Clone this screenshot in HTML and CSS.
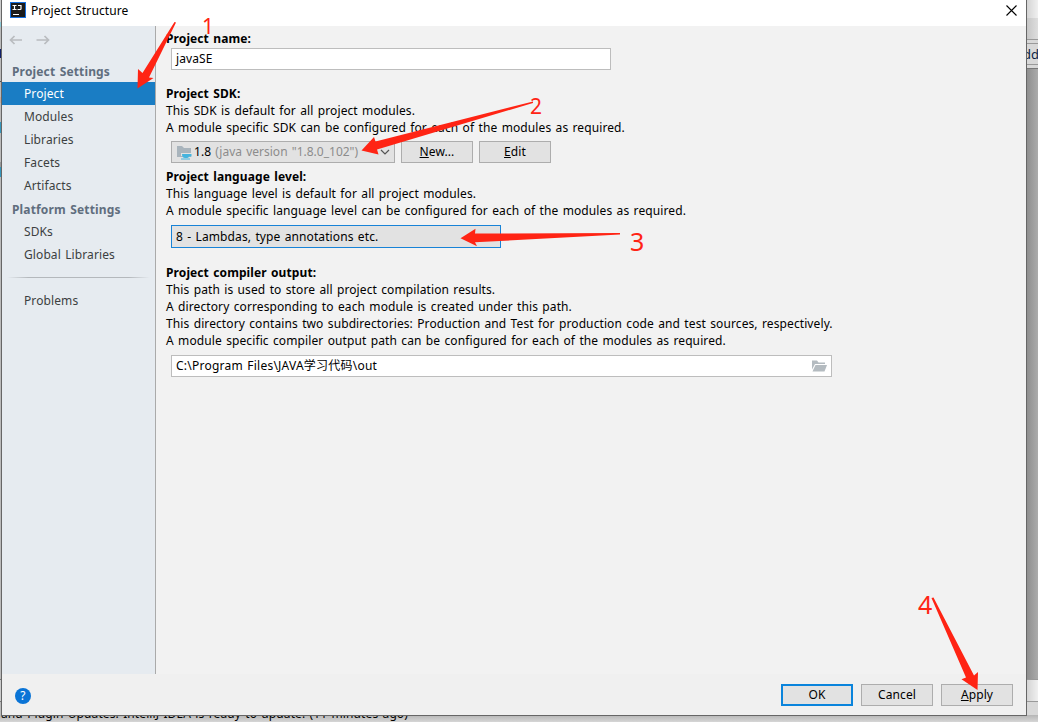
FILE: index.html
```html
<!doctype html>
<html>
<head>
	<meta charset='utf-8'>
	<title>Project Structure</title>

	<link rel="stylesheet" href="styles.css">
</head>
<body>

	<!-- the IDE behind the dialog -->
	<div class='ide'>
		<div class='ide-left'></div>
		<div class='ide-right'>
			<div class='ide-title'></div>
			<div class='ide-menu'></div>
			<div class='ide-toolbar'>dd</div>
			<div class='ide-editor'></div>
			<div class='ide-tabs'></div>
		</div>
		<div class='ide-status'><span>and Plugin Updates: IntelliJ IDEA is ready to update. (11 minutes ago)</span></div>
	</div>

	<div class='dialog'>
		<header class='titlebar'>
			<svg class='logo' width='16' height='16' viewBox='0 0 16 16'>
				<rect width='16' height='16' fill='#146ee0'/>
				<rect x='1' y='1' width='14' height='14' fill='#1b1b1b'/>
				<path d='M2.500 3.500h4M4.500 3.500v4M2.500 7.500h4M8 3.500h3v3.200q0 .8-.8.8H7.500M3 12.500h6' fill='none' stroke='#fff' stroke-width='1.2'/>
			</svg>
			<h1>Project Structure</h1>
			<svg class='close' width='11' height='11' viewBox='0 0 11 11'>
				<path d='M.5.5l10 10M10.5.5l-10 10' stroke='#000' stroke-width='1.1'/>
			</svg>
		</header>

		<div class='main'>
			<nav class='sidebar'>
				<div class='history'>
					<svg width='14' height='10' viewBox='0 0 14 10'><path d='M13 5H1.500M5.500 1L1.500 5l4 4' fill='none' stroke='#b9bcbf' stroke-width='1.7'/></svg>
					<svg width='14' height='10' viewBox='0 0 14 10'><path d='M.5 5h12M8.500 1l4 4-4 4' fill='none' stroke='#b9bcbf' stroke-width='1.7'/></svg>
				</div>
				<h2>Project Settings</h2>
				<ul>
					<li class='active'>Project</li>
					<li>Modules</li>
					<li>Libraries</li>
					<li>Facets</li>
					<li>Artifacts</li>
				</ul>
				<h2>Platform Settings</h2>
				<ul>
					<li>SDKs</li>
					<li>Global Libraries</li>
				</ul>
				<hr>
				<ul>
					<li>Problems</li>
				</ul>
			</nav>

			<div class='content'>
				<section class='name'>
					<h3>Project name:</h3>
					<div class='field name-field'>javaSE</div>
				</section>

				<section class='sdk'>
					<h3>Project SDK:</h3>
					<p>This SDK is default for all project modules.</p>
					<p>A module specific SDK can be configured for each of the modules as required.</p>
					<div class='row'>
						<div class='combo sdk-combo'>
							<svg width='16' height='16' viewBox='0 0 16 16'>
								<path d='M1 2h5l2 2h7v9H1z' fill='#a9b4bc'/>
								<path d='M5 9h11v3H5z' fill='#e3e3e3'/>
								<path d='M6 10h9.500v2.500H13Q12.500 14 11 14H9Q6 14 6 10zM5 14.500h9v1H5z' fill='#45b4de'/>
							</svg>
							<span class='version'>1.8</span>
							<span class='detail'>(java version "1.8.0_102")</span>
							<svg class='chevron' width='10' height='6' viewBox='0 0 10 6'><path d='M1 1l4 4 4-4' fill='none' stroke='#555' stroke-width='1.2'/></svg>
						</div>
						<div class='button'><u>N</u>ew...</div>
						<div class='button'><u>E</u>dit</div>
					</div>
				</section>

				<section class='level'>
					<h3>Project language level:</h3>
					<p>This language level is default for all project modules.</p>
					<p>A module specific language level can be configured for each of the modules as required.</p>
					<div class='combo level-combo'>
						<span>8 - Lambdas, type annotations etc.</span>
						<svg class='chevron' width='10' height='6' viewBox='0 0 10 6'><path d='M1 1l4 4 4-4' fill='none' stroke='#555' stroke-width='1.2'/></svg>
					</div>
				</section>

				<section class='output'>
					<h3>Project compiler output:</h3>
					<p>This path is used to store all project compilation results.</p>
					<p>A directory corresponding to each module is created under this path.</p>
					<p>This directory contains two subdirectories: Production and Test for production code and test sources, respectively.</p>
					<p>A module specific compiler output path can be configured for each of the modules as required.</p>
					<div class='field output-field'>
						<span>C:\Program Files\JAVA学习代码\out</span>
						<svg width='15' height='12' viewBox='0 0 15 12'>
							<path d='M0 .5h5l1.500 2H13V4H3L0 9.500z' fill='#b4bbc0'/>
							<path d='M3.500 5H15L12.500 11.500H.5z' fill='#b4bbc0'/>
						</svg>
					</div>
				</section>
			</div>
		</div>

		<footer class='footer'>
			<div class='help'>?</div>
			<div class='button default'>OK</div>
			<div class='button'>Cancel</div>
			<div class='button'><u>A</u>pply</div>
		</footer>
	</div>

	<!-- numbered steps drawn over the dialog -->
	<svg class='notes' width='1038' height='722' viewBox='0 0 1038 722'>
		<path d='M174.500 22l1.500.5L149 77.500l4.500.5L137.500 88.500 138 69l4.500 4z'/>
		<path d='M533 101.500v1.500L377 149.500l1.500 5L361.500 150.500l12.500-13.500 1.500 4.500z'/>
		<path d='M620 233v1.500L475 242.300l2 4L460.500 238.300l15-9.500-.5 4.800z'/>
		<path d='M931.500 598l2-.5L974 675.500l4-3.500-.5 18-16-10.700 4.500-1.800z'/>
		<text x='202' y='34'>1</text>
		<text x='530' y='114'>2</text>
		<text class='big' x='630' y='251'>3</text>
		<text class='big' x='918' y='614'>4</text>
	</svg>

</body>
</html>
```
FILE: styles.css
```css
body {
	margin: 0;
	width: 1038px;
	height: 722px;
	overflow: hidden;
	position: relative;
	font: 12px/17px "Noto Sans", "Noto Sans CJK SC", sans-serif;
	letter-spacing: .1px;
	word-spacing: 1.1px;
	color: #000;
}

h1, h2, h3, p, ul {
	margin: 0;
	padding: 0;
	font-size: inherit;
	list-style: none;
	white-space: nowrap;
}

/* The window in the background */
.ide {
	height: 722px;
	display: grid;
	grid-template: 715px 7px / 2px 1fr 12px;
	background: #c8c8c8;
}

/* slivers of the project tree */
.ide-left {
	background: linear-gradient(#ccc 22px, #8ccbd8 22px 27px, #bbb 27px 49px, #10206a 49px 58px, #bbb 58px 81px, #555 81px 82px, #bbb 82px 97px, #c9a99a 97px 103px, #bbb 103px 122px, #3597bd 122px 133px, #bbb 133px 162px, #999 162px 167px, #3597bd 167px 177px, #bbb 177px 679px, #777 679px 680px, #ccc 680px 701px, #777 701px 702px, #bbb 702px);
}

.ide-right {
	grid-column: 3;
	display: flex;
	flex-direction: column;
	background: #d8d8d8;
}

.ide-title {
	height: 18px;
	background: linear-gradient(to right, #d2d2d2, #f0f0f0);
}

.ide-menu {
	height: 21px;
	background: linear-gradient(to right, #c4c4c4, #dedede);
	border-bottom: 1px solid #999;
}

.ide-toolbar {
	height: 20px;
	margin-top: 3px;
	border: 1px solid #999;
	border-width: 1px 0;
	line-height: 20px;
	font-size: 13px;
	color: #0c1f44;
	text-indent: -3px;
	overflow: hidden;
}

.ide-editor {
	height: 610px;
	margin-top: 3px;
	background: linear-gradient(to right, #8c8c8c, #ababab);
	border-top: 1px solid #777;
}

.ide-tabs {
	height: 21px;
	background: linear-gradient(to right, #d2d2d2, #f0f0f0);
	border: 1px solid #999;
	border-width: 1px 0;
}

.ide-status {
	grid-column: 1 / 4;
	display: flex;
	align-items: flex-end;
	overflow: hidden;
	white-space: nowrap;
	background: linear-gradient(#b5b5b5, #d6d6d6);
}

.ide-status span {
	padding-left: 1px;
	line-height: 17px;
}

/* The dialog */
.dialog {
	position: absolute;
	top: 0;
	left: 1px;
	width: 1024px;
	height: 715px;
	border: 1px solid #666;
	border-top: 0;
	display: flex;
	flex-direction: column;
	background: #f0f0f0;
}

.titlebar {
	height: 26px;
	display: flex;
	align-items: center;
	background: #fff;
}

.logo {
	margin: -6px 5px 0 8px;
}

.titlebar h1 {
	font-weight: normal;
	margin-top: -5px;
}

.close {
	margin: -6px 9px 0 auto;
}

.main {
	height: 648px;
	display: flex;
	background: #f2f2f2;
}

/* Left navigation */
.sidebar {
	width: 153px;
	border-right: 1px solid #aaa;
	background: #e6ebf0;
	line-height: 23px;
	color: #3c3f41;
}

.history {
	height: 28px;
	display: flex;
	align-items: center;
	gap: 13px;
	padding: 0 0 5px 7px;
}

.sidebar h2 {
	height: 23px;
	padding-left: 10px;
	line-height: 25px;
	letter-spacing: .15px;
	color: #606e7e;
}

.sidebar li {
	padding-left: 22px;
}

.sidebar .active {
	color: #fff;
	background: #1a7dc4;
}

.sidebar hr {
	height: 1px;
	margin: 11px 5px;
	border: 0;
	background: linear-gradient(to right, transparent, #b4b8bc 15%, #b4b8bc 85%, transparent);
}

/* Right side */
.content {
	padding: 4px 0 0 10px;
}

.content section {
	display: flex;
	flex-direction: column;
}

.field, .combo, .button {
	box-sizing: border-box;
	height: 22px;
	border: 1px solid #adadad;
	line-height: 20px;
	white-space: nowrap;
}

.field, .combo {
	display: flex;
	align-items: center;
	padding: 0 4px;
	margin-left: 5px;
}

.field {
	background: #fff;
	border-color: #bdbdbd;
}

.combo, .button {
	background: #e2e2e2;
}

.button {
	width: 72px;
	text-align: center;
}

.field svg, .combo .chevron {
	margin-left: auto;
}

.name-field {
	width: 440px;
	margin-top: 1px;
}

.sdk {
	margin-top: 15px;
}

.row {
	display: flex;
	gap: 6px;
	margin-top: 5px;
}

.sdk-combo {
	width: 224px;
}

.version {
	margin: 0 4px 0 2px;
}

.detail {
	color: #8c8c8c;
	letter-spacing: 0;
}

.level {
	margin-top: 5px;
}

.level-combo {
	width: 330px;
	height: 23px;
	margin-top: 6px;
	border-color: #1883d7;
}

.output {
	margin-top: 16px;
}

.output-field {
	width: 661px;
	margin-top: 6px;
	letter-spacing: .23px;
}

/* Bottom bar */
.footer {
	flex: 1;
	display: flex;
	align-items: center;
	gap: 8px;
	padding: 0 13px;
}

.help {
	width: 16px;
	height: 16px;
	margin: 2px auto 0 0;
	border-radius: 50%;
	background: #0a74d6;
	color: #fff;
	line-height: 16px;
	text-align: center;
}

.default {
	border: 2px solid #0a84dc;
	line-height: 18px;
}

/* Arrows and numbers */
.notes {
	position: absolute;
	top: 0;
	left: 0;
	fill: #ff2414;
	font-size: 21px;
}

.notes .big {
	font-size: 25px;
}
```
